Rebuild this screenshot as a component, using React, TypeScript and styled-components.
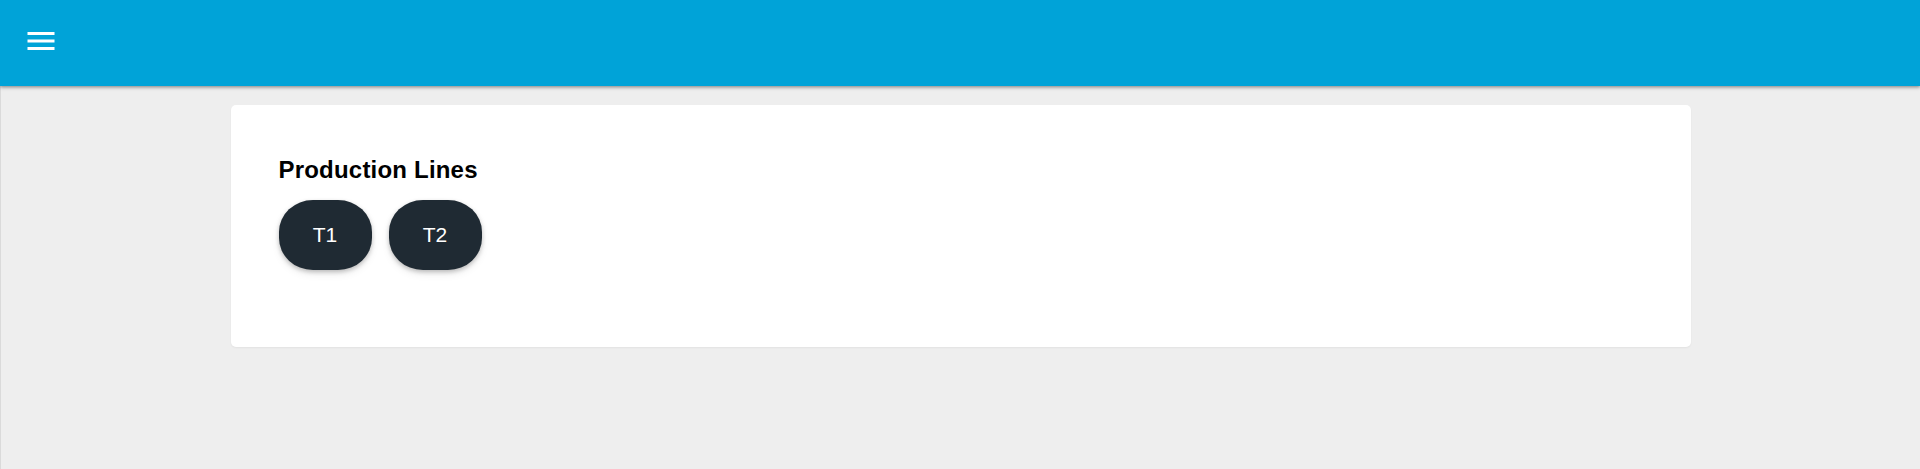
import React from "react";
import styled, { createGlobalStyle } from "styled-components";

const GlobalStyle = createGlobalStyle`
  html, body {
    margin: 0;
    padding: 0;
    background: #eeeeee;
    font-family: "Liberation Sans", Arial, Helvetica, sans-serif;
  }
  * { box-sizing: border-box; }
`;

const Page = styled.div`
  min-height: 100vh;
  display: flex;
  flex-direction: column;
  background: #eeeeee;
`;

const AppBar = styled.header`
  height: 86px;
  background: #00a3d8;
  display: flex;
  align-items: flex-start;
  padding: 23px 0 0 23px;
  box-shadow: 0 1px 3px rgba(0, 0, 0, 0.35), 0 2px 4px rgba(0, 0, 0, 0.12);
  position: relative;
  z-index: 1;
`;

const MenuButton = styled.button`
  width: 36px;
  height: 36px;
  padding: 0;
  border: none;
  background: transparent;
  color: #ffffff;
  display: flex;
  cursor: pointer;
`;

const Main = styled.main`
  flex: 1;
  padding-top: 19px;
  border-left: 1px solid #dadada;
`;

const Card = styled.section`
  width: 1460px;
  margin: 0 auto;
  background: #ffffff;
  border-radius: 5px;
  padding: 50px 48px 77px;
  box-shadow: 0 1px 2px rgba(0, 0, 0, 0.05);
`;

const Title = styled.h2`
  margin: 0 0 16px;
  font-size: 24px;
  line-height: 29px;
  font-weight: 700;
  letter-spacing: 0.2px;
  color: #000000;
`;

const LineRow = styled.div`
  display: flex;
  gap: 17px;
`;

const LineButton = styled.button`
  width: 93px;
  height: 70px;
  border: none;
  border-radius: 34px / 32px;
  background: #1f2a33;
  color: #ffffff;
  font-family: "Liberation Sans", Arial, sans-serif;
  font-size: 21px;
  font-weight: 400;
  display: flex;
  align-items: center;
  justify-content: center;
  box-shadow: 0 2px 4px rgba(0, 0, 0, 0.22), 0 4px 8px rgba(0, 0, 0, 0.08);
  cursor: pointer;
`;

const MenuIcon = () => (
  <svg width="36" height="36" viewBox="0 0 24 24" fill="currentColor">
    <path d="M3 18h18v-2H3v2zm0-5h18v-2H3v2zm0-7v2h18V6H3z" />
  </svg>
);

const lines = ["T1", "T2"];

export default function App() {
  return (
    <>
      <GlobalStyle />
      <Page>
        <AppBar>
          <MenuButton aria-label="menu">
            <MenuIcon />
          </MenuButton>
        </AppBar>
        <Main>
          <Card>
            <Title>Production Lines</Title>
            <LineRow>
              {lines.map((l) => (
                <LineButton key={l}>{l}</LineButton>
              ))}
            </LineRow>
          </Card>
        </Main>
      </Page>
    </>
  );
}
